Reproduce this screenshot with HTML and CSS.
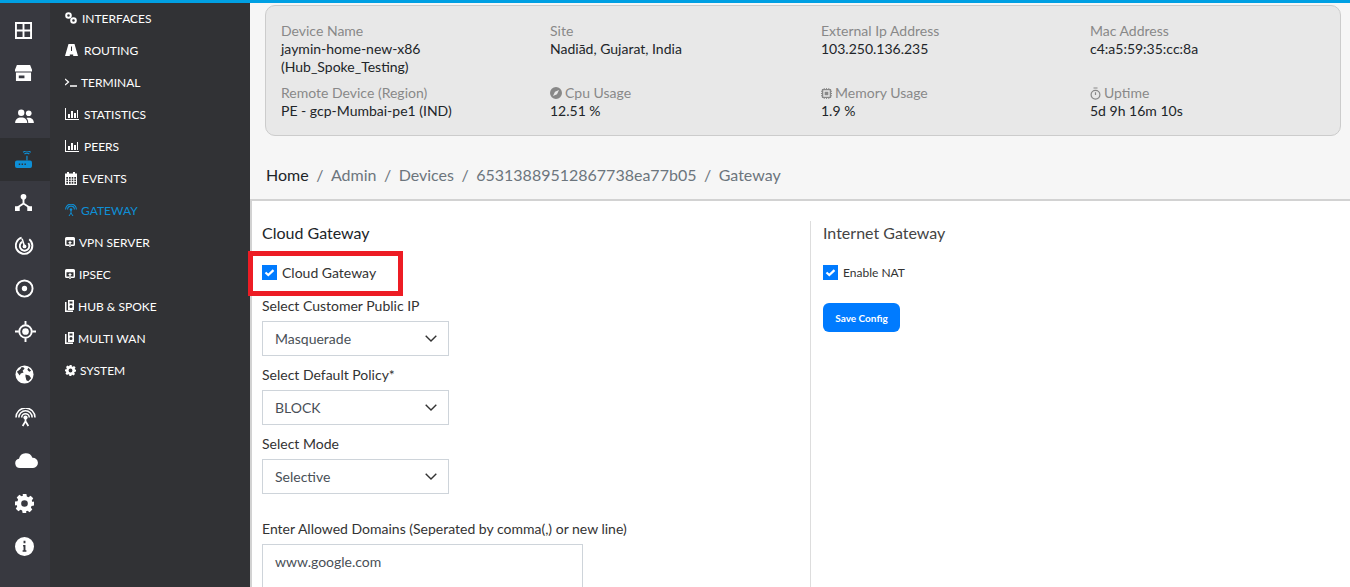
FILE: index.html
```html
<!DOCTYPE html>
<html lang="en">
<head>
  <meta charset="UTF-8" />
  <title>Gateway</title>
  <link rel="stylesheet" href="styles.css">
</head>
<body>
  <div class="topline"></div>
  <div class="app">

    <aside class="rail">
      <a class="rail-item"><svg viewBox="0 0 18 18" width="17" height="17"><path fill="none" stroke="#fff" stroke-width="2" d="M1 1h16v16H1zM9 1v16M1 9h16"/></svg></a>
      <a class="rail-item"><svg viewBox="0 0 18 18" width="17" height="17"><path fill="#fff" d="M2 0h14l2 5v2H0V5zM1 8h16v9H1zM4 11v3h6v-3z" fill-rule="evenodd"/></svg></a>
      <a class="rail-item"><svg viewBox="0 0 20 16" width="19" height="15"><circle cx="6.5" cy="4" r="3.4" fill="#fff"/><circle cx="14.5" cy="4.5" r="3" fill="#fff"/><path fill="#fff" d="M0 15c0-4 2.500-6 6.500-6s6.500 2 6.500 6zM14 15c0-2-.6-4-2-5.300 4-1.200 8 .8 8 5.300z"/></svg></a>
      <a class="rail-item active"><svg viewBox="0 0 18 18" width="17" height="17"><path fill="#0e8fd6" d="M2 10h14a2 2 0 0 1 2 2v4a2 2 0 0 1-2 2H2a2 2 0 0 1-2-2v-4a2 2 0 0 1 2-2z"/><path fill="#0e8fd6" d="M12 5h1.300v5H12z"/><path fill="none" stroke="#0e8fd6" stroke-width="1.200" d="M10 3.200c1.600-1.200 3.600-1.200 5.200 0M8.500 1.400c2.500-1.800 5.700-1.800 8.200 0"/><path fill="#313235" d="M4 13.300h1.500v1.500H4zM7 13.300h1.500v1.500H7zM10 13.300h1.500v1.500H10z"/></svg></a>
      <a class="rail-item"><svg viewBox="0 0 18 18" width="17" height="17"><circle cx="9" cy="3" r="3" fill="#fff"/><path fill="#fff" d="M0 13h5v5H0zM13 13h5v5h-5z"/><path fill="none" stroke="#fff" stroke-width="2" d="M9 5v5l-6 4M9 10l6 4"/></svg></a>
      <a class="rail-item"><svg viewBox="0 0 20 20" width="19" height="19"><path fill="none" stroke="#fff" stroke-width="2" d="M7 1.800a8.700 8.700 0 1 0 8 1.500"/><path fill="none" stroke="#fff" stroke-width="2" d="M7.500 6.200a5 5 0 1 0 6.500 1.200"/><circle cx="10" cy="11" r="2" fill="#fff"/><path stroke="#fff" stroke-width="1.600" d="M10 11L7.500 3"/></svg></a>
      <a class="rail-item"><svg viewBox="0 0 20 20" width="19" height="19"><circle cx="10" cy="10" r="8.500" fill="none" stroke="#fff" stroke-width="2"/><circle cx="10" cy="10" r="2.800" fill="#fff"/></svg></a>
      <a class="rail-item"><svg viewBox="0 0 22 22" width="21" height="21"><circle cx="11" cy="11" r="6.500" fill="none" stroke="#fff" stroke-width="2"/><circle cx="11" cy="11" r="3.500" fill="#fff"/><path stroke="#fff" stroke-width="2" d="M11 0v4M11 18v4M0 11h4M18 11h4"/></svg></a>
      <a class="rail-item"><svg viewBox="0 0 20 20" width="19" height="19"><circle cx="10" cy="10" r="9.500" fill="#fff"/><path fill="#36373c" d="M2 7c2-1 4-3 5-5 2 0 3 1 3 2l-2 2 1 2-3 1-1 2zM11 10l4 1 2 3-3 3-2-1-1-4zM14 3l3 3-2 1-2-2z"/></svg></a>
      <a class="rail-item"><svg viewBox="0 0 22 20" width="21" height="19"><path fill="none" stroke="#fff" stroke-width="1.600" d="M1 10a10 10 0 0 1 20 0M4 10a7 7 0 0 1 14 0M7 10a4 4 0 0 1 8 0"/><circle cx="11" cy="10" r="2.200" fill="#fff"/><path fill="none" stroke="#fff" stroke-width="1.800" d="M11 11v3l-3 5M11 14l3 5"/></svg></a>
      <a class="rail-item"><svg viewBox="0 0 24 16" width="23" height="15"><path fill="#fff" d="M5 16a5 5 0 0 1-1-9.900A7.500 7.500 0 0 1 18.300 5 5.500 5.500 0 0 1 19 16z"/></svg></a>
      <a class="rail-item"><svg viewBox="0 0 20 20" width="19" height="19"><path fill="#fff" fill-rule="evenodd" d="M8 0h4l.5 2.600 1.700.7 2.200-1.500 2.800 2.800-1.500 2.200.7 1.700L20 8v4l-2.600.5-.7 1.700 1.500 2.200-2.800 2.800-2.200-1.500-1.700.7L12 20H8l-.5-2.600-1.700-.7-2.200 1.500-2.800-2.800 1.500-2.200-.7-1.700L0 12V8l2.600-.5.7-1.700-1.500-2.200 2.800-2.800 2.200 1.500 1.700-.7zM10 6.500a3.500 3.500 0 1 0 0 7 3.500 3.500 0 0 0 0-7z"/></svg></a>
      <a class="rail-item"><svg viewBox="0 0 20 20" width="19" height="19"><path fill="#fff" fill-rule="evenodd" d="M10 0a10 10 0 1 1 0 20 10 10 0 0 1 0-20zM9 4v2.500h2V4zM8.500 8.500V10H9v4H8v1.500h4V14h-1V8.500z"/></svg></a>
    </aside>

    <nav class="subnav">
      <a class="nav-item"><svg viewBox="0 0 12 12" width="12" height="12"><g fill="none" stroke="#fff" stroke-width="2"><circle cx="3.500" cy="3.500" r="2.300"/><circle cx="8.500" cy="8.500" r="2.300"/></g></svg>INTERFACES</a>
      <a class="nav-item"><svg class="wide" viewBox="0 0 13 12" width="13" height="12"><path fill="#fff" fill-rule="evenodd" d="M3.500 0h6L13 12H8.200v-1.600H4.800V12H0zM6 2.500v4.500h1V2.500z"/></svg>ROUTING</a>
      <a class="nav-item"><svg class="tight" viewBox="0 0 12 12" width="12" height="12"><path fill="none" stroke="#fff" stroke-width="1.300" d="M0 3l3.500 3L0 9M5 10h7"/></svg>TERMINAL</a>
      <a class="nav-item"><svg viewBox="0 0 14 12" width="14" height="12"><path fill="#fff" d="M0 0h1v11h13v1H0zM3 6h2v4H3zM6 3h2v7H6zM9 5h2v5H9zM12 2h1v8h-1z"/></svg>STATISTICS</a>
      <a class="nav-item"><svg viewBox="0 0 14 12" width="14" height="12"><path fill="#fff" d="M0 0h1v11h13v1H0zM3 6h2v4H3zM6 3h2v7H6zM9 5h2v5H9zM12 2h1v8h-1z"/></svg>PEERS</a>
      <a class="nav-item"><svg viewBox="0 0 12 13" width="12" height="13"><path fill="#fff" fill-rule="evenodd" d="M2 0h2v1.500h4V0h2v1.500h2V13H0V1.500h2zM1.300 5v1.700H3V5zM4 5v1.700h1.700V5zM6.700 5v1.700h1.600V5zM9.300 5v1.700H11V5zM1.300 7.600v1.700H3V7.600zM4 7.600v1.700h1.700V7.600zM6.700 7.600v1.700h1.600V7.600zM9.300 7.600v1.700H11V7.600zM1.300 10.100v1.700H3v-1.700zM4 10.100v1.700h1.700v-1.700zM6.700 10.100v1.700h1.600v-1.700zM9.300 10.100v1.700H11v-1.700z"/></svg>EVENTS</a>
      <a class="nav-item active"><svg class="tight" viewBox="0 0 12 12" width="12" height="12"><path fill="none" stroke="#0e8fd6" stroke-width="1.100" d="M.6 5.500a5.400 5.400 0 0 1 10.800 0M2.600 5.500a3.400 3.400 0 0 1 6.800 0"/><circle cx="6" cy="5.500" r="1.300" fill="#0e8fd6"/><path fill="none" stroke="#0e8fd6" d="M6 6v3l-2 3M6 9l2 3"/></svg>GATEWAY</a>
      <a class="nav-item"><svg class="narrow" viewBox="0 0 10 10" width="10" height="10"><path fill="#fff" fill-rule="evenodd" d="M1.500 0h7A1.500 1.500 0 0 1 10 1.500v6A1.500 1.500 0 0 1 8.500 9H6V7.500h2.500V3.300h-7v4.200H4V9H1.500A1.500 1.500 0 0 1 0 7.500v-6A1.500 1.500 0 0 1 1.500 0zM5 4l2 2H5.700v4H4.300V6H3z"/></svg>VPN SERVER</a>
      <a class="nav-item"><svg class="narrow" viewBox="0 0 10 10" width="10" height="10"><path fill="#fff" fill-rule="evenodd" d="M1.500 0h7A1.500 1.500 0 0 1 10 1.500v6A1.500 1.500 0 0 1 8.500 9H6V7.500h2.500V3.300h-7v4.200H4V9H1.500A1.500 1.500 0 0 1 0 7.500v-6A1.500 1.500 0 0 1 1.500 0zM5 4l2 2H5.700v4H4.300V6H3z"/></svg>IPSEC</a>
      <a class="nav-item"><svg class="narrow" viewBox="0 0 9 12" width="9" height="12"><path fill="#fff" fill-rule="evenodd" d="M3 0h6v10H3zM4.500 1.500v2h3v-2zM6 5a1.500 1.500 0 1 0 0 3 1.500 1.500 0 0 0 0-3zM0 2h1.500v8.500H8V12H0z"/></svg>HUB &amp; SPOKE</a>
      <a class="nav-item"><svg class="narrow" viewBox="0 0 9 12" width="9" height="12"><path fill="#fff" fill-rule="evenodd" d="M3 0h6v10H3zM4.500 1.500v2h3v-2zM6 5a1.500 1.500 0 1 0 0 3 1.500 1.500 0 0 0 0-3zM0 2h1.500v8.500H8V12H0z"/></svg>MULTI WAN</a>
      <a class="nav-item"><svg class="tight" viewBox="0 0 20 20" width="11" height="11"><path fill="#fff" fill-rule="evenodd" d="M8 0h4l.5 2.600 1.700.7 2.200-1.500 2.800 2.800-1.500 2.200.7 1.700L20 8v4l-2.600.5-.7 1.700 1.500 2.200-2.800 2.800-2.200-1.500-1.700.7L12 20H8l-.5-2.600-1.700-.7-2.200 1.500-2.800-2.800 1.500-2.200-.7-1.700L0 12V8l2.600-.5.7-1.700-1.500-2.200 2.800-2.800 2.200 1.500 1.700-.7zM10 6.500a3.500 3.500 0 1 0 0 7 3.500 3.500 0 0 0 0-7z"/></svg>SYSTEM</a>
    </nav>

    <main class="content">
      <section class="device-card">
        <div class="info">
          <span class="info-label">Device Name</span>
          <span>jaymin-home-new-x86<br>(Hub_Spoke_Testing)</span>
        </div>
        <div class="info">
          <span class="info-label">Site</span>
          <span>Nadiād, Gujarat, India</span>
        </div>
        <div class="info">
          <span class="info-label">External Ip Address</span>
          <span>103.250.136.235</span>
        </div>
        <div class="info">
          <span class="info-label">Mac Address</span>
          <span>c4:a5:59:35:cc:8a</span>
        </div>
        <div class="info">
          <span class="info-label">Remote Device (Region)</span>
          <span>PE - gcp-Mumbai-pe1 (IND)</span>
        </div>
        <div class="info">
          <span class="info-label"><svg viewBox="0 0 12 12" width="12" height="12"><path fill="#888" fill-rule="evenodd" d="M6 0a6 6 0 1 1 0 12A6 6 0 0 1 6 0zM9 3L5 4.800 3 9l4-1.800z"/></svg>Cpu Usage</span>
          <span>12.51 %</span>
        </div>
        <div class="info">
          <span class="info-label"><svg viewBox="0 0 12 12" width="11" height="11"><path fill="#888" fill-rule="evenodd" d="M3 0h1v1h1.500V0h1v1H8V0h1v1h2v2h1v1h-1v1.500h1v1h-1V8h1v1h-1v2H9v1H8v-1H6.500v1h-1v-1H4v1H3v-1H1V9H0V8h1V6.500H0v-1h1V4H0V3h1V1h2zM2.500 2.500v7h7v-7zM4 4h4v4H4z"/></svg>Memory Usage</span>
          <span>1.9 %</span>
        </div>
        <div class="info">
          <span class="info-label"><svg viewBox="0 0 12 14" width="11" height="13"><path fill="none" stroke="#888" stroke-width="1.300" d="M6 3.500a4.800 4.800 0 1 0 0 9.600 4.800 4.800 0 0 0 0-9.600zM6 5.500v3M3.800 1h4.400"/></svg>Uptime</span>
          <span>5d 9h 16m 10s</span>
        </div>
      </section>

      <ol class="breadcrumb">
        <li class="home">Home</li>
        <li>Admin</li>
        <li>Devices</li>
        <li>65313889512867738ea77b05</li>
        <li>Gateway</li>
      </ol>

      <section class="panel">
        <div class="col-left">
          <h2>Cloud Gateway</h2>
          <div class="callout">
            <label class="check"><input type="checkbox" checked>Cloud Gateway</label>
            <span class="callout-box"></span>
          </div>
          <label class="field-label">Select Customer Public IP</label>
          <select class="field"><option>Masquerade</option></select>
          <label class="field-label">Select Default Policy*</label>
          <select class="field"><option>BLOCK</option></select>
          <label class="field-label">Select Mode</label>
          <select class="field"><option>Selective</option></select>
          <label class="field-label domains">Enter Allowed Domains (Seperated by comma(,) or new line)</label>
          <textarea class="domains-box">www.google.com</textarea>
        </div>
        <div class="col-right">
          <h2>Internet Gateway</h2>
          <label class="check small"><input type="checkbox" checked>Enable NAT</label>
          <button class="save">Save Config</button>
        </div>
      </section>
    </main>
  </div>
</body>
</html>
```

FILE: styles.css
```css
* {
  box-sizing: border-box;
}

html, body {
  height: 100%;
}

body {
  margin: 0;
  overflow: hidden;
  font-family: Lato, 'Open Sans', sans-serif;
  font-size: 14px;
  color: #212529;
  background: #f6f6f6;
}

.topline {
  height: 3px;
  background: #00a0e3;
}

.app {
  display: flex;
  height: calc(100vh - 3px);
}

/* icon rail */
.rail {
  width: 50px;
  flex: none;
  background: #383940;
  padding-top: 6px;
}

.rail-item {
  display: flex;
  align-items: center;
  height: 43px;
  padding-left: 15px;
}

.rail-item.active {
  background: #2e2f32;
}

/* second level menu */
.subnav {
  width: 200px;
  flex: none;
  background: #313235;
}

.nav-item {
  display: flex;
  align-items: center;
  gap: 5px;
  height: 32px;
  padding: 0 0 2px 15px;
  font-size: 12px;
  color: #fff;
}

.nav-item svg.wide { margin-right: 1px; }
.nav-item svg.tight { margin-right: -1px; }
.nav-item svg.narrow { margin-right: -1px; }

.nav-item.active {
  color: #0e8fd6;
}

/* main area */
.content {
  flex: 1;
  min-width: 0;
}

.device-card {
  display: grid;
  grid-template-columns: 269px 271px 269px 1fr;
  align-content: start;
  row-gap: 8px;
  margin: 2px 9px 0 15px;
  height: 131px;
  padding: 16px 15px 0;
  background: #e8e8e8;
  border: 1px solid #ccc;
  border-radius: 10px;
  line-height: 18px;
}

.info {
  display: flex;
  flex-direction: column;
}

.info-label {
  display: flex;
  align-items: center;
  gap: 3px;
  color: #888;
}

.breadcrumb {
  display: flex;
  list-style: none;
  margin: 0;
  padding: 14px 0 0 16px;
  height: 63px;
  align-items: center;
  font-size: 16px;
  color: #6c757d;
}

.breadcrumb li + li::before {
  content: "/";
  padding: 0 7.5px;
  color: #6c757d;
}

.breadcrumb .home {
  color: #212529;
}

.panel {
  display: flex;
  height: 388px;
  background: #fff;
  border-top: 2px solid #d2d2d2;
  border-left: 2px solid #d2d2d2;
  padding-top: 20px;
}

.col-left {
  width: 559px;
  padding-left: 10px;
  border-right: 1px solid #ddd;
  flex: none;
}

.col-right {
  flex: 1;
  padding-left: 12px;
}

h2 {
  margin: 0;
  font-size: 16px;
  font-weight: 400;
  line-height: 24px;
}

.col-right h2 {
  color: #444;
}

.check {
  display: flex;
  align-items: center;
  gap: 5px;
  height: 15px;
  color: #333;
  margin-top: 20px;
}

.check.small {
  font-size: 12px;
}

.check input {
  appearance: none;
  width: 15px;
  height: 15px;
  margin: 0;
  background: #007bff url("data:image/svg+xml,%3Csvg xmlns='http://www.w3.org/2000/svg' viewBox='0 0 15 15'%3E%3Cpath fill='none' stroke='%23fff' stroke-width='2.200' d='M3.500 7.500l2.800 2.600 5.200-5'/%3E%3C/svg%3E") center no-repeat;
}

.callout {
  position: relative;
}

/* red annotation drawn on the screenshot */
.callout-box {
  position: absolute;
  left: -14px;
  top: -14px;
  width: 155px;
  height: 45px;
  border: 5px solid #ed1c24;
}

.field-label {
  display: block;
  line-height: 18px;
  margin-top: 10px;
  color: #333;
}

.callout + .field-label {
  margin-top: 17px;
}

.field {
  display: block;
  appearance: none;
  width: 187px;
  height: 35px;
  margin-top: 6px;
  padding: 0 12px;
  font: inherit;
  color: #495057;
  background: #fff url("data:image/svg+xml,%3Csvg xmlns='http://www.w3.org/2000/svg' viewBox='0 0 12 7'%3E%3Cpath fill='none' stroke='%23333' stroke-width='1.400' d='M.7.7L6 6l5.300-5.300'/%3E%3C/svg%3E") right 11px center / 12px 7px no-repeat;
  border: 1px solid #ced4da;
  border-radius: 0;
}

.field-label.domains {
  margin-top: 26px;
}

.domains-box {
  display: block;
  width: 321px;
  height: 90px;
  margin-top: 6px;
  padding: 8px 12px;
  font: inherit;
  line-height: 18px;
  color: #495057;
  border: 1px solid #ced4da;
  resize: none;
}

.save {
  display: block;
  width: 77px;
  height: 29px;
  margin-top: 23px;
  padding: 0;
  font-family: inherit;
  font-size: 10px;
  font-weight: 700;
  color: #fff;
  background: #007bff;
  border: none;
  border-radius: 6px;
}
```
